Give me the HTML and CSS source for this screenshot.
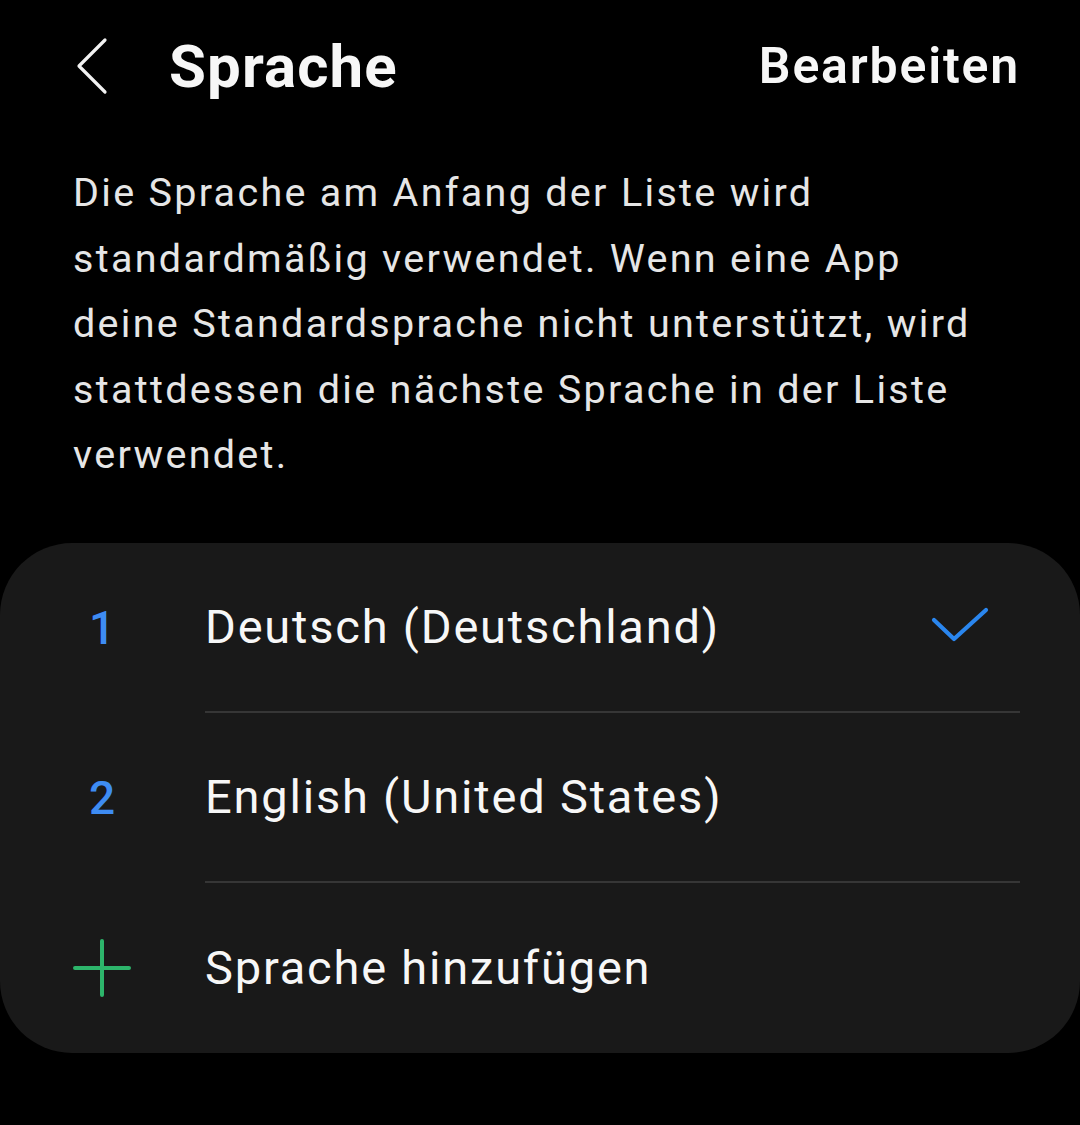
FILE: index.html
```html
<!DOCTYPE html>
<html lang="de">
<head>
<meta charset="utf-8">
<link rel="stylesheet" href="styles.css">
</head>
<body>
<div class="screen">
  <header class="topbar">
    <div class="back">
      <svg width="36" height="60" viewBox="0 0 36 60"><path d="M31 4 L5 30 L31 56" fill="none" stroke="#f2f2f2" stroke-width="3.2" stroke-linecap="round" stroke-linejoin="round"/></svg>
    </div>
    <h1 class="title">Sprache</h1>
    <div class="edit">Bearbeiten</div>
  </header>
  <p class="intro">Die Sprache am Anfang der Liste wird<br>standardmäßig verwendet. Wenn eine App<br>deine Standardsprache nicht unterstützt, wird<br>stattdessen die nächste Sprache in der Liste<br>verwendet.</p>
  <div class="card">
    <div class="row">
      <div class="lead num">1</div>
      <div class="body">
        <span class="label">Deutsch (Deutschland)</span>
        <svg class="check" width="60" height="40" viewBox="0 0 60 40"><path d="M4 13 L24 32 L56 3" fill="none" stroke="#2a86ee" stroke-width="4.2" stroke-linecap="round" stroke-linejoin="round"/></svg>
      </div>
    </div>
    <div class="row">
      <div class="lead num">2</div>
      <div class="body">
        <span class="label">English (United States)</span>
      </div>
    </div>
    <div class="row">
      <div class="lead">
        <svg width="58" height="58" viewBox="0 0 58 58"><path d="M29 2 V56 M2 29 H56" fill="none" stroke="#2db56b" stroke-width="4" stroke-linecap="round"/></svg>
      </div>
      <div class="body last">
        <span class="label">Sprache hinzufügen</span>
      </div>
    </div>
  </div>
</div>
</body>
</html>
```
FILE: styles.css
```css
html, body {
  margin: 0;
  padding: 0;
  background: #000;
}
body {
  width: 1080px;
  height: 1125px;
  overflow: hidden;
  font-family: Roboto, "Noto Sans", "Liberation Sans", sans-serif;
  color: #f7f7f7;
}
.screen {
  display: flex;
  flex-direction: column;
}
.topbar {
  display: flex;
  align-items: center;
  height: 132px;
  padding: 0 60px 0 74px;
}
.back {
  display: flex;
  align-items: center;
  width: 95px;
}
.title {
  margin: 0;
  flex: 1;
  font-size: 60px;
  font-weight: 700;
  letter-spacing: 1.1px;
  color: #f7f7f7;
}
.edit {
  font-size: 50px;
  font-weight: 600;
  letter-spacing: 1.8px;
  color: #f7f7f7;
}
.intro {
  margin: 28px 20px 0 73px;
  font-size: 39.5px;
  line-height: 65.5px;
  color: #e6e6e6;
  letter-spacing: 2.3px;
  white-space: nowrap;
}
.card {
  margin-top: 55px;
  background: #191919;
  border-radius: 72px;
  display: flex;
  flex-direction: column;
}
.row {
  display: flex;
  height: 170px;
}
.lead {
  width: 58px;
  margin-left: 73px;
  margin-right: 74px;
  display: flex;
  align-items: center;
  justify-content: center;
}
.num {
  font-size: 46px;
  font-weight: 500;
  color: #3e8cf3;
}
.body {
  flex: 1;
  display: flex;
  align-items: center;
  justify-content: space-between;
  margin-right: 60px;
  border-bottom: 2px solid #363636;
  padding-right: 30px;
}
.body.last {
  border-bottom: none;
}
.label {
  font-size: 47px;
  color: #f7f7f7;
  letter-spacing: 1.8px;
}
.check {
  display: block;
}
```
